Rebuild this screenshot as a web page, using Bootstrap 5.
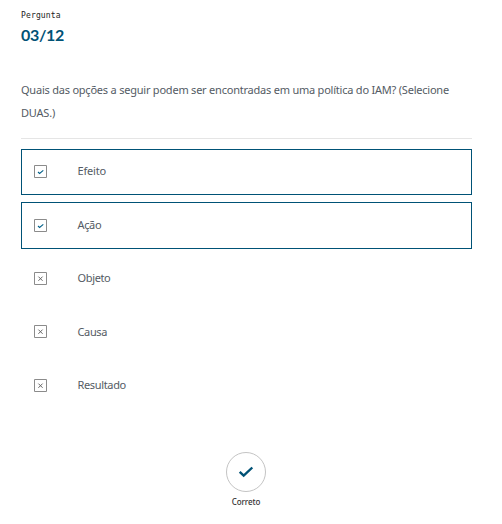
<!DOCTYPE html>
<html lang="pt">
<head>
<meta charset="utf-8">
<meta name="viewport" content="width=device-width, initial-scale=1">
<title>Pergunta 03/12</title>
<link href="https://cdn.jsdelivr.net/npm/bootstrap@5.3.0/dist/css/bootstrap.min.css" rel="stylesheet">
<style>
body{font-family:"Noto Sans",sans-serif;font-size:11px;color:#545b64;background:#fff;overflow:hidden}
.quiz{width:451px;margin-left:21px;padding-top:10px}
.kicker{font:400 8px/12px "DejaVu Sans Mono",monospace;color:#222;letter-spacing:.15px}
.counter{font:700 16px/24px Lato,sans-serif;color:#005276;margin:1px 0 0;letter-spacing:-.3px}
.question{line-height:23px;margin-top:31px;height:61px;border-bottom:1px solid #e5e5e5;letter-spacing:-.22px}
.options{margin-top:10px;gap:7px}
.option{height:46.3px;border:1px solid transparent;padding-left:12px;letter-spacing:-.35px}
.option span{margin-top:-1px}
.option.chosen{border-color:#005276}
.option.chosen:first-child{height:46px;letter-spacing:-.2px}
.option.chosen + .chosen{height:47px}
.option svg{width:14px;height:14px;margin-right:29.5px}
.result{margin-top:43px;padding-right:1px}
.result svg{width:42px;height:42px;margin-top:-1px}
.verdict{font-size:8px;line-height:12px;font-weight:500;color:#333;margin-top:3px;letter-spacing:-.1px}
</style>
<script src="https://cdn.jsdelivr.net/npm/bootstrap@5.3.0/dist/js/bootstrap.bundle.min.js" defer></script>
</head>
<body>
<svg class="d-none" aria-hidden="true">
<symbol id="tick" viewBox="0 0 14 14"><path d="M.5.5h12v12H.5z" fill="none" stroke="#8b8b8b"/><path d="M4 7l1.6 1.5L9.3 5.4" fill="none" stroke="#005f88" stroke-width="1.1"/></symbol>
<symbol id="cross" viewBox="0 0 14 14"><path d="M.5.5h12v12H.5z" fill="none" stroke="#8b8b8b"/><path d="M4.4 4.6l4.2 4.2M8.6 4.6L4.4 8.8" fill="none" stroke="#666" stroke-width="1"/></symbol>
</svg>
<main class="quiz">
<div class="kicker">Pergunta</div>
<h1 class="counter">03/12</h1>
<div class="question">Quais das opções a seguir podem ser encontradas em uma política do IAM? (Selecione<br>DUAS.)</div>
<div class="options d-flex flex-column">
<div class="option chosen d-flex align-items-center"><svg><use href="#tick"/></svg><span>Efeito</span></div>
<div class="option chosen d-flex align-items-center"><svg><use href="#tick"/></svg><span>Ação</span></div>
<div class="option d-flex align-items-center"><svg><use href="#cross"/></svg><span>Objeto</span></div>
<div class="option d-flex align-items-center"><svg><use href="#cross"/></svg><span>Causa</span></div>
<div class="option d-flex align-items-center"><svg><use href="#cross"/></svg><span>Resultado</span></div>
</div>
<div class="result d-flex flex-column align-items-center">
<svg viewBox="0 0 42 42"><circle cx="21" cy="21" r="19.5" fill="none" stroke="#c4c4c4"/><path d="M14.7 20.8l4 3.8L27.3 16.5" fill="none" stroke="#005276" stroke-width="2.4"/></svg>
<div class="verdict">Correto</div>
</div>
</main>
</body>
</html>
